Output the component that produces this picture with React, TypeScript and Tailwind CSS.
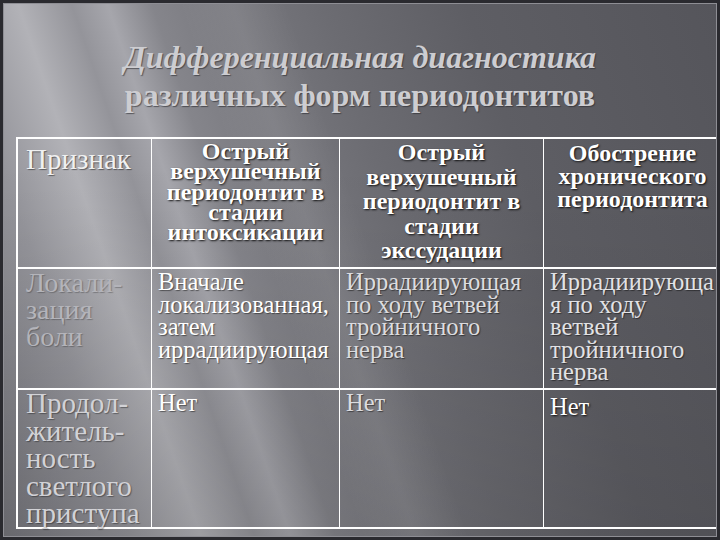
import React from "react"

const shadow = "[text-shadow:1px_1px_2px_rgba(0,0,0,0.85)]"
const soft = "[text-shadow:1px_1px_1px_rgba(0,0,0,0.45)]"

const headCell = `border-r-[1.5px] border-b-2 border-white px-1 text-center font-bold text-[24px] text-white ${shadow}`
const bodyCell = `border-r-[1.5px] border-b-2 border-white pl-[6px] text-[24.5px] leading-[22.5px] ${soft}`

const App: React.FC = () => {
  return (
    <div className="w-[720px] h-[540px] overflow-hidden bg-[#2a2a2f] p-[3px] [font-family:Liberation_Serif,Times_New_Roman,serif]">
      <div className="relative h-full overflow-hidden border border-[#8e8e94] bg-[linear-gradient(71deg,#76767c_0%,#95959b_14%,#b2b2b7_22%,#94949a_28%,#a6a6ac_32%,#85858b_37%,#7a7a80_44%,#6c6c72_56%,#5e5e64_72%,#55555b_100%)]">
        {/* soft diagonal light streaks */}
        <div className="pointer-events-none absolute inset-0 bg-[linear-gradient(71deg,transparent_0%,transparent_40%,rgba(255,255,255,0.08)_46%,transparent_52%,transparent_100%),linear-gradient(to_bottom,transparent_30%,rgba(0,0,0,0.12)_100%)]" />

        <div className="relative">
          <div className="pt-[34px] text-center leading-[38px] text-[32px] font-bold text-[#cdcdd1] [text-shadow:1px_1px_1px_rgba(40,40,45,0.6)]">
            <div className="italic">Дифференциальная диагностика</div>
            <div>различных форм периодонтитов</div>
          </div>

          <div className="ml-[12px] mt-[23px] grid w-[720px] grid-cols-[134px_188px_204px_194px] grid-rows-[130px_121px_139px] border-l-2 border-t-2 border-white">
            <div className={`border-r-[1.5px] border-b-2 border-white pl-[8px] pt-[5px] text-[29px] leading-[30px] text-[#f0f0f0] ${soft}`}>
              Признак
            </div>
            <div className={`${headCell} pt-[2px] leading-[20.25px]`}>
              Острый
              <br />
              верхушечный
              <br />
              периодонтит в
              <br />
              стадии
              <br />
              интоксикации
            </div>
            <div className={`${headCell} pt-[1px] leading-[24.5px]`}>
              Острый
              <br />
              верхушечный
              <br />
              периодонтит в
              <br />
              стадии
              <br />
              экссудации
            </div>
            <div className={`${headCell} pt-[2.5px] pr-[20px] leading-[23px]`}>
              Обострение
              <br />
              хронического
              <br />
              периодонтита
            </div>

            <div className="border-r-[1.5px] border-b-2 border-white pl-[8px] text-[28px] leading-[27px] text-[#b4b4ba] [text-shadow:1px_1px_1px_rgba(0,0,0,0.25)]">
              Локали-
              <br />
              зация
              <br />
              боли
            </div>
            <div className={`${bodyCell} pt-[2px] text-white`}>
              Вначале
              <br />
              локализованная,
              <br />
              затем
              <br />
              иррадиирующая
            </div>
            <div className={`${bodyCell} pt-[2px] text-[#dcdcdf]`}>
              Иррадиирующая
              <br />
              по ходу ветвей
              <br />
              тройничного
              <br />
              нерва
            </div>
            <div className={`${bodyCell} pt-[2px] text-[#e2e2e5]`}>
              Иррадиирующа
              <br />я по ходу
              <br />
              ветвей
              <br />
              тройничного
              <br />
              нерва
            </div>

            <div className="border-r-[1.5px] border-b-2 border-white pl-[8px] text-[29px] leading-[27.5px] text-[#d2d2d6] [text-shadow:1px_1px_1px_rgba(0,0,0,0.35)]">
              Продол-
              <br />
              житель-
              <br />
              ность
              <br />
              светлого
              <br />
              приступа
            </div>
            <div className={`${bodyCell} pt-[2px] text-white`}>Нет</div>
            <div className={`${bodyCell} pt-[2px] text-[#dcdcdf]`}>Нет</div>
            <div className={`${bodyCell} pt-[6px] text-white ${shadow}`}>Нет</div>
          </div>
        </div>
      </div>
    </div>
  )
}

export default App
